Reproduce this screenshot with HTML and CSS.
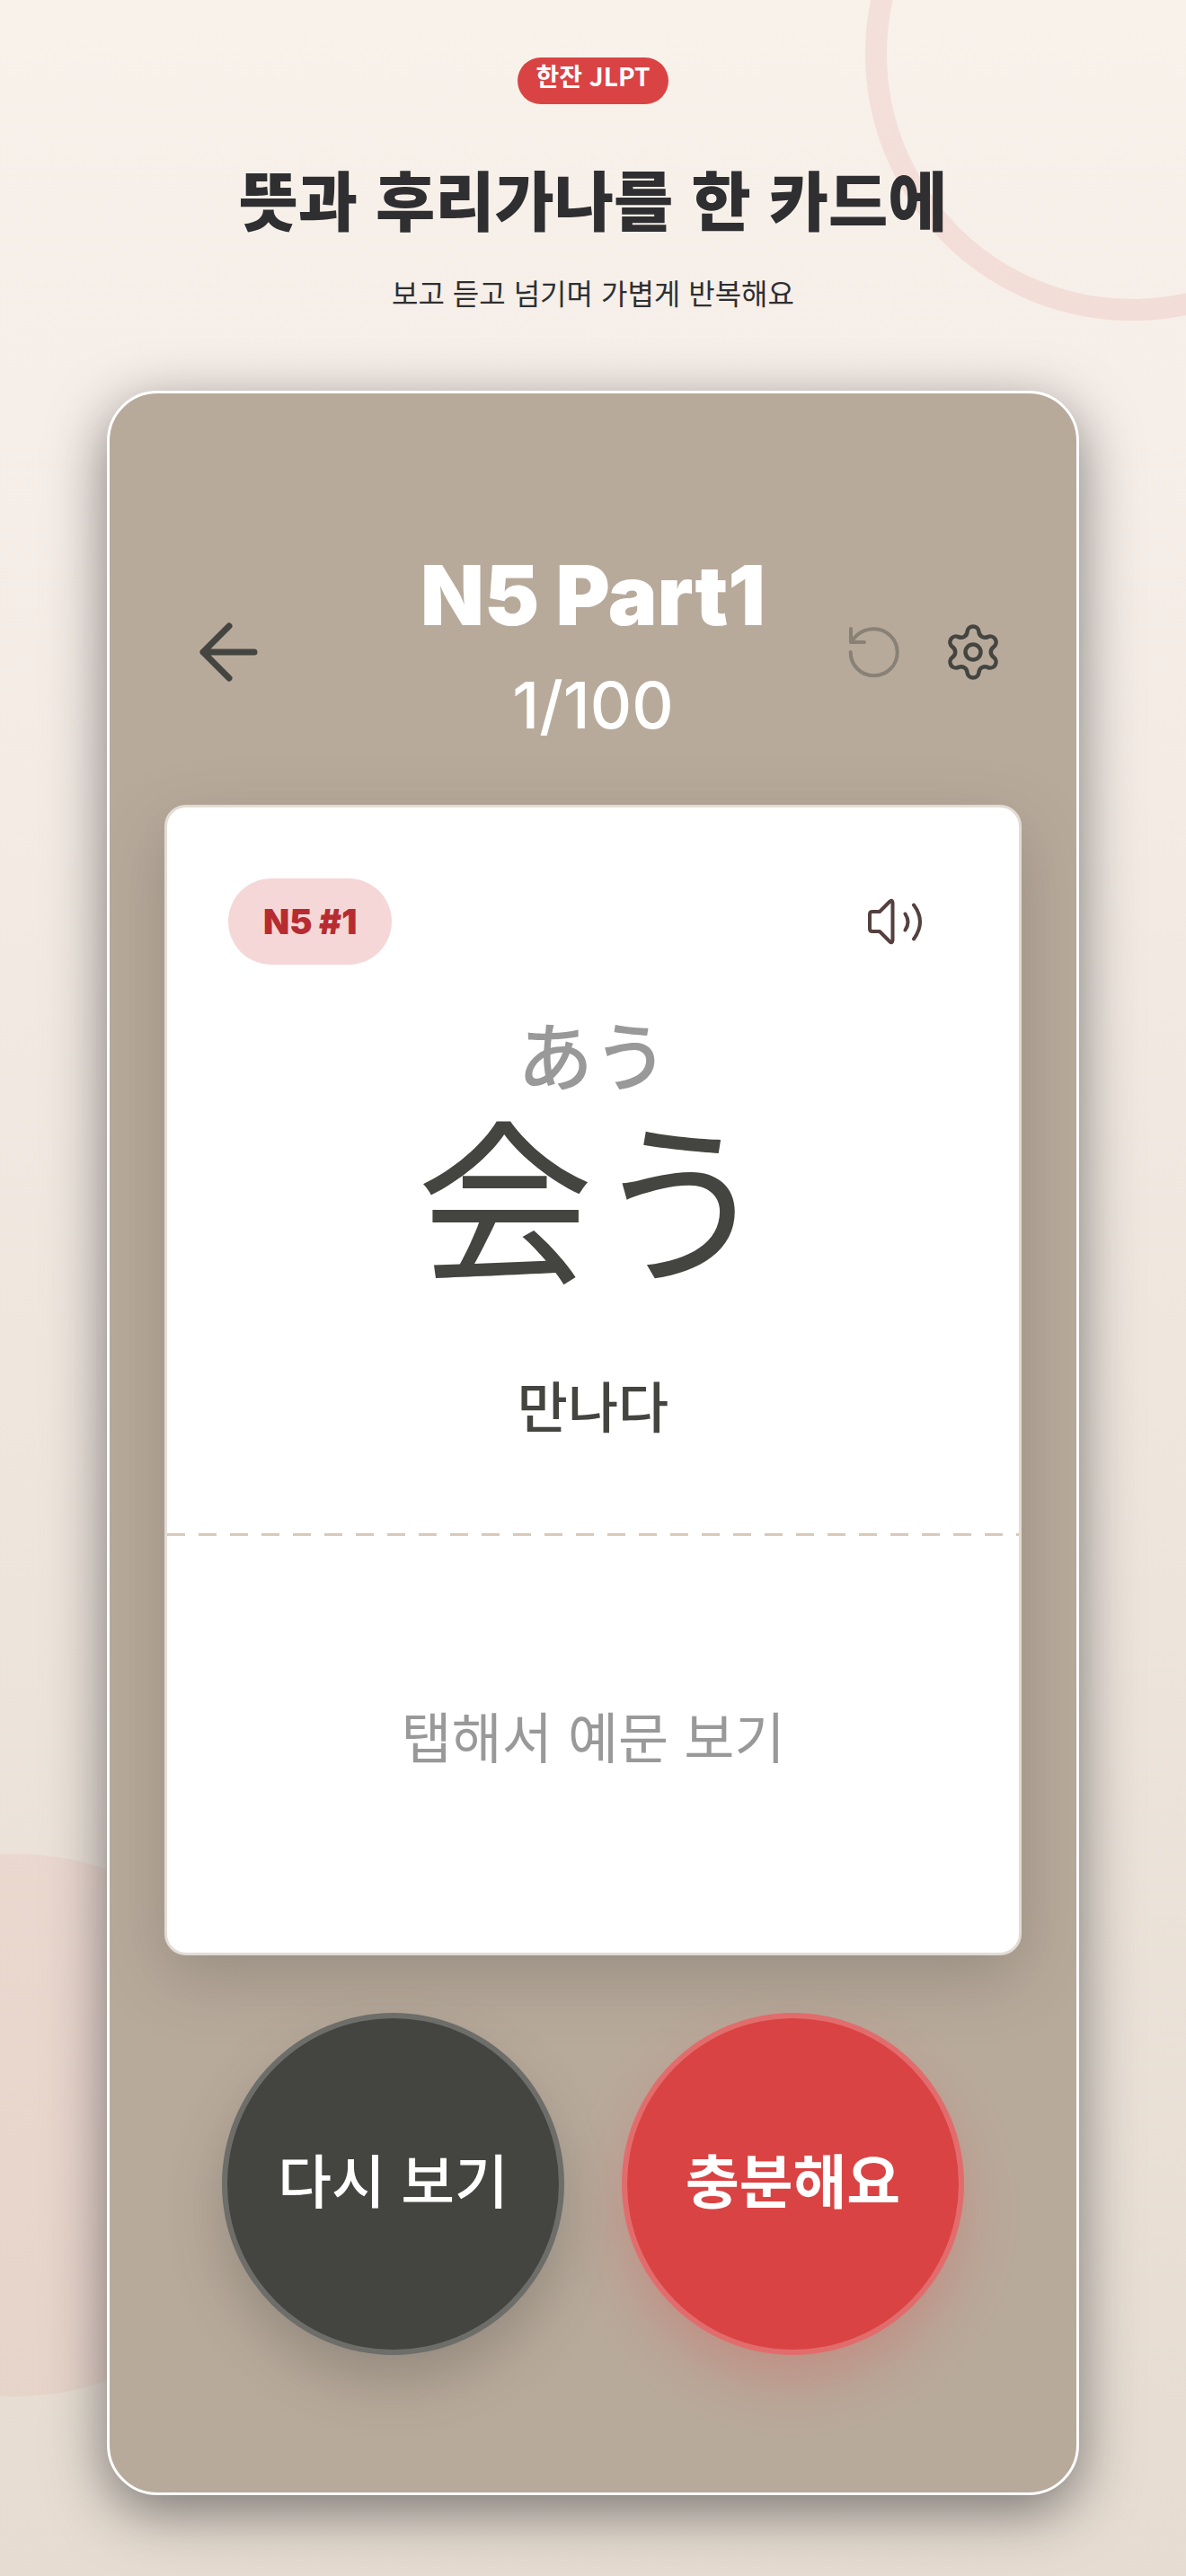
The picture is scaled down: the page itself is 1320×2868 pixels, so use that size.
FILE: index.html
```
<!DOCTYPE html>
<html lang="ko">
<head>
    <meta charset="UTF-8">
    <meta name="viewport" content="width=device-width, initial-scale=1.0">
    <title>한잔 JLPT</title>
    <link rel="stylesheet" href="styles.css">
</head>
<body>

    <div class="page">
        <div class="ring"></div>
        <div class="disc"></div>

        <header class="intro">
            <span class="brand">한잔 JLPT</span>
            <h1>뜻과 후리가나를 한 카드에</h1>
            <p>보고 듣고 넘기며 가볍게 반복해요</p>
        </header>

        <main class="phone">
            <div class="topbar">
                <button class="icon-btn back" type="button" aria-label="뒤로">
                    <svg width="72" height="72" viewBox="0 0 72 72" stroke-width="7">
                        <path d="M65 36H8M37 7L8 36l29 29"/>
                    </svg>
                </button>
                <div class="heading">
                    <h2>N5 Part1</h2>
                    <p>1/100</p>
                </div>
                <div class="actions">
                    <button class="icon-btn restart" type="button" aria-label="처음부터" disabled>
                        <svg width="60" height="60" viewBox="0 0 60 60" stroke-width="4">
                            <path d="M4 4v15h15M5 18C11 9 20 4.300 29.700 4.300A26 26 0 1 1 3.700 30"/>
                        </svg>
                    </button>
                    <button class="icon-btn" type="button" aria-label="설정">
                        <svg width="64" height="64" viewBox="-32 -32 64 64" stroke-width="4.5">
                            <path d="M22.760 5.660A6.500 6.500 0 0 1 16.280 16.880A6.900 6.900 0 0 0 6.480 22.540A6.500 6.500 0 0 1 -6.480 22.540A6.900 6.900 0 0 0 -16.280 16.880A6.500 6.500 0 0 1 -22.760 5.660A6.900 6.900 0 0 0 -22.760 -5.660A6.500 6.500 0 0 1 -16.280 -16.880A6.900 6.900 0 0 0 -6.480 -22.540A6.500 6.500 0 0 1 6.480 -22.540A6.900 6.900 0 0 0 16.280 -16.880A6.500 6.500 0 0 1 22.760 -5.660A6.900 6.900 0 0 0 22.760 5.660Z"/>
                            <circle r="8.500"/>
                        </svg>
                    </button>
                </div>
            </div>

            <article class="card">
                <section class="front">
                    <div class="card-top">
                        <span class="tag">N5 #1</span>
                        <button class="icon-btn speaker" type="button" aria-label="발음 듣기">
                            <svg width="64" height="56" viewBox="0 0 64 56" stroke-width="4">
                                <path d="M8 17h8L27 6q3-3 3.500 1v42q-.5 4-3.500 1L16 39H8q-3 0-3-3V20q0-3 3-3z"/>
                                <path d="M44.500 19.500q6 9 0 18M54 9.500q14 18.500 0 38"/>
                            </svg>
                        </button>
                    </div>
                    <p class="kana" lang="ja">あう</p>
                    <p class="word" lang="ja">会う</p>
                    <p class="meaning">만나다</p>
                </section>
                <svg class="divider" height="3" aria-hidden="true">
                    <line x1="0" y1="1.5" x2="100%" y2="1.5"/>
                </svg>
                <button class="example" type="button">탭해서 예문 보기</button>
            </article>

            <div class="answers">
                <button class="again" type="button">다시 보기</button>
                <button class="enough" type="button">충분해요</button>
            </div>
        </main>
    </div>

</body>
</html>
```
FILE: styles.css
```
* {
    margin: 0;
    padding: 0;
    box-sizing: border-box;
}
body {
    font-family: Inter, "Noto Sans CJK KR", sans-serif;
    color: #2f2f31;
}
button {
    border: none;
    background: none;
    font-family: inherit;
    cursor: pointer;
}
.page {
    position: relative;
    overflow: hidden;
    min-height: 100vh;
    padding: 64px 119px 90px;
    background: linear-gradient(#f8f2eb, #f6eee8 16%, #e6dcd1);
}

/* background shapes */
.ring {
    position: absolute;
    top: -237px;
    right: -237px;
    width: 594px;
    height: 594px;
    border: 24px solid rgba(218, 67, 67, 0.1);
    border-radius: 50%;
}
.disc {
    position: absolute;
    bottom: 200px;
    left: -284px;
    width: 604px;
    height: 604px;
    background-color: rgba(218, 67, 67, 0.06);
    border-radius: 50%;
}

.intro {
    position: relative;
    display: flex;
    flex-direction: column;
    align-items: center;
    font-family: "Noto Sans CJK KR", sans-serif;
    text-align: center;
}
.brand {
    height: 52px;
    padding: 0 20px;
    border-radius: 26px;
    background-color: #da4343;
    color: #fff;
    font-size: 28px;
    font-weight: bold;
    line-height: 40px;
}
.intro h1 {
    margin-top: 48px;
    font-size: 72px;
    font-weight: 900;
    line-height: 112px;
}
.intro p {
    margin: 25px 0 86px;
    font-size: 32px;
    line-height: 48px;
}

.phone {
    position: relative;
    padding: 166px 61px 153px;
    border: 3px solid #fff;
    border-radius: 56px;
    background-color: #b8aa9b;
    box-shadow: 0 18px 64px rgba(47, 47, 49, 0.6);
}
.topbar {
    display: grid;
    grid-template-columns: 1fr auto 1fr;
    align-items: center;
    padding: 0 22px;
    margin-bottom: 48px;
}
.heading {
    color: #fff;
    text-align: center;
}
.heading h2 {
    font-size: 92px;
    font-weight: 900;
    line-height: 118px;
}
.heading p {
    font-size: 72px;
    font-weight: 500;
    line-height: 126px;
}
.icon-btn {
    display: flex;
    align-items: center;
    color: #444540;
}
.icon-btn svg {
    fill: none;
    stroke: currentColor;
    stroke-linecap: round;
    stroke-linejoin: round;
}
.back {
    padding-left: 13px;
}
.actions {
    display: flex;
    justify-content: flex-end;
    gap: 48px;
}
.restart {
    opacity: 0.4;
}

.card {
    border: 3px solid #e2dcd5;
    border-radius: 24px;
    background-color: #fff;
    box-shadow: 0 24px 72px rgba(68, 69, 64, 0.28);
}
.front {
    padding: 79px 0 95px;
    text-align: center;
}
.card-top {
    display: flex;
    justify-content: space-between;
    align-items: center;
    padding: 0 91px 0 68px;
    margin-bottom: 42px;
}
.tag {
    padding: 0 39px;
    border-radius: 48px;
    background-color: #f5d7d8;
    color: #b72c30;
    font-size: 38px;
    font-weight: 900;
    line-height: 96px;
}
.speaker {
    justify-content: center;
    width: 96px;
    height: 96px;
    color: #54413f;
}
.kana {
    color: #999;
    font-family: "Noto Sans CJK JP", sans-serif;
    font-size: 84px;
    font-weight: 500;
    line-height: 112px;
}
.word {
    color: #444540;
    font-family: "Noto Sans CJK JP", sans-serif;
    font-size: 196px;
    line-height: 200px;
}
.meaning {
    margin-top: 96px;
    color: #444540;
    font-size: 61px;
    font-weight: 500;
    line-height: 88px;
}
.divider {
    display: block;
    width: 100%;
    stroke: #d9c9b8;
    stroke-width: 3;
    stroke-dasharray: 20 15;
}
.example {
    display: block;
    width: 100%;
    height: 464px;
    padding-bottom: 22px;
    color: #999;
    font-size: 61px;
}

.answers {
    display: flex;
    justify-content: center;
    gap: 64px;
    margin-top: 64px;
}
.answers button {
    width: 381px;
    height: 381px;
    padding-bottom: 14px;
    border: 6px solid rgba(255, 255, 255, 0.22);
    border-radius: 50%;
    color: #fff;
    font-size: 65px;
    font-weight: 500;
}
.answers .again {
    background-color: #444540;
    box-shadow: 0 30px 60px rgba(68, 69, 64, 0.3);
}
.answers .enough {
    background-color: #da4343;
    box-shadow: 0 30px 60px rgba(218, 67, 67, 0.25);
    font-weight: bold;
}
```
